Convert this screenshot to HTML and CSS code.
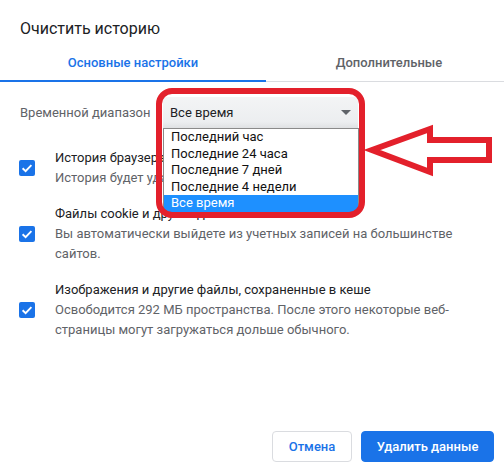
FILE: index.html
```html
<!DOCTYPE html>
<html lang="ru">
<head>
<meta charset="utf-8">
<title>Очистить историю</title>
<link rel="stylesheet" href="styles.css">
</head>
<body>
<div class="dialog">
  <h1 class="title">Очистить историю</h1>
  <div class="tabs">
    <div class="tab active">Основные настройки</div>
    <div class="tab">Дополнительные</div>
  </div>
  <div class="range-row">
    <span class="range-label">Временной диапазон</span>
    <div class="select">
      <span class="select-value">Все время</span>
      <span class="select-caret"></span>
      <ul class="options">
        <li>Последний час</li>
        <li>Последние 24 часа</li>
        <li>Последние 7 дней</li>
        <li>Последние 4 недели</li>
        <li class="selected">Все время</li>
      </ul>
      <div class="red-frame"></div>
    </div>
  </div>
  <div class="items">
    <div class="item">
      <span class="checkbox"><svg viewBox="0 0 16 16" width="16" height="16"><path d="M3.6 8.2 L6.6 11.1 L12.4 5.1" fill="none" stroke="#fff" stroke-width="1.9"/></svg></span>
      <div class="item-text">
        <div class="item-title">История браузера</div>
        <div class="item-sub">История будет удалена со всех устройств.</div>
      </div>
    </div>
    <div class="item">
      <span class="checkbox"><svg viewBox="0 0 16 16" width="16" height="16"><path d="M3.6 8.2 L6.6 11.1 L12.4 5.1" fill="none" stroke="#fff" stroke-width="1.9"/></svg></span>
      <div class="item-text">
        <div class="item-title">Файлы cookie и другие данные сайтов</div>
        <div class="item-sub">Вы автоматически выйдете из учетных записей на большинстве сайтов.</div>
      </div>
    </div>
    <div class="item">
      <span class="checkbox"><svg viewBox="0 0 16 16" width="16" height="16"><path d="M3.6 8.2 L6.6 11.1 L12.4 5.1" fill="none" stroke="#fff" stroke-width="1.9"/></svg></span>
      <div class="item-text">
        <div class="item-title">Изображения и другие файлы, сохраненные в кеше</div>
        <div class="item-sub">Освободится 292 МБ пространства. После этого некоторые веб-страницы могут загружаться дольше обычного.</div>
      </div>
    </div>
  </div>
  <div class="footer">
    <button class="btn btn-cancel">Отмена</button>
    <button class="btn btn-primary">Удалить данные</button>
  </div>
  <svg class="red-arrow" width="140" height="70" viewBox="0 0 140 70">
    <polygon points="12,35 70,14 70,25 129,25 129,45 70,45 70,57" fill="#fff" stroke="#e3202b" stroke-width="6" stroke-linejoin="miter"/>
  </svg>
</div>
</body>
</html>
```

FILE: styles.css
```css
* { box-sizing: border-box; }
html, body { margin: 0; padding: 0; background: #fff; }
body {
  font-family: Roboto, "Noto Sans", Arial, sans-serif;
  color: #202124;
  font-size: 13px;
}
.dialog {
  position: relative;
  width: 504px;
  height: 473px;
  display: flex;
  flex-direction: column;
  overflow: hidden;
}
.title {
  margin: 0;
  padding: 19px 20px 0;
  font-size: 16px;
  font-weight: 400;
  line-height: 20px;
  color: #202124;
}
.tabs {
  display: flex;
  margin-top: 5px;
}
.tab {
  height: 38px;
  display: flex;
  align-items: center;
  justify-content: center;
  font-size: 13px;
  font-weight: 500;
  color: #5f6368;
  border-bottom: 1px solid #dadce0;
  flex: 1;
  padding-left: 8px;
}
.tab.active {
  flex: 0 0 266px;
  color: #1a73e8;
  border-bottom: 2px solid #1a73e8;
  padding-left: 0;
}
.range-row {
  display: flex;
  align-items: center;
  margin-top: 15px;
  padding-left: 20px;
}
.range-label {
  width: 143px;
  color: #5f6368;
  font-size: 13px;
}
.select {
  position: relative;
  width: 195px;
  height: 31px;
  background: linear-gradient(#f3f4f5, #eceef0 80%, #dfe1e3);
  display: flex;
  align-items: center;
  padding-left: 7px;
}
.select-value { font-size: 13px; color: #202124; }
.select-caret {
  position: absolute;
  right: 7px;
  top: 13px;
  width: 0;
  height: 0;
  border-left: 5px solid transparent;
  border-right: 5px solid transparent;
  border-top: 5px solid #5f6368;
}
.options {
  position: absolute;
  left: 0;
  top: 31px;
  width: 196px;
  margin: 0;
  padding: 0;
  list-style: none;
  background: #fff;
  border: 1px solid #8a8a8a;
  border-bottom: none;
  z-index: 2;
}
.options li {
  height: 16.6px;
  line-height: 16.6px;
  padding-left: 7px;
  font-size: 13px;
  color: #111;
}
.options li.selected {
  background: #1e90ff;
  color: #fff;
}
.red-frame {
  position: absolute;
  left: -7px;
  top: -9px;
  width: 209px;
  height: 130px;
  border: 6px solid #e3202b;
  border-radius: 16px;
  z-index: 3;
}
.items {
  display: flex;
  flex-direction: column;
  gap: 16px;
  margin-top: 20px;
  padding: 0 20px 0 19px;
}
.item {
  display: flex;
  align-items: center;
  gap: 20px;
}
.checkbox {
  flex: 0 0 16px;
  width: 16px;
  height: 16px;
  background: #1a73e8;
  border-radius: 2px;
  display: block;
}
.checkbox svg { display: block; }
.item-text { line-height: 20px; }
.item-title { color: #202124; font-size: 13px; }
.item-sub { color: #5f6368; font-size: 13px; }
.footer {
  margin-top: auto;
  display: flex;
  justify-content: flex-end;
  gap: 9px;
  padding: 0 10px 11px 0;
}
.btn {
  font-family: Roboto, "Noto Sans", Arial, sans-serif;
  font-size: 13px;
  font-weight: 500;
  height: 31px;
  border-radius: 4px;
  padding: 0;
  white-space: nowrap;
  cursor: pointer;
}
.btn-cancel {
  width: 80px;
  background: #fff;
  color: #1a73e8;
  border: 1px solid #dadce0;
}
.btn-primary {
  width: 133px;
  background: #1a73e8;
  color: #fff;
  border: 1px solid #1a73e8;
}
.red-arrow {
  position: absolute;
  left: 360px;
  top: 115px;
}
```
